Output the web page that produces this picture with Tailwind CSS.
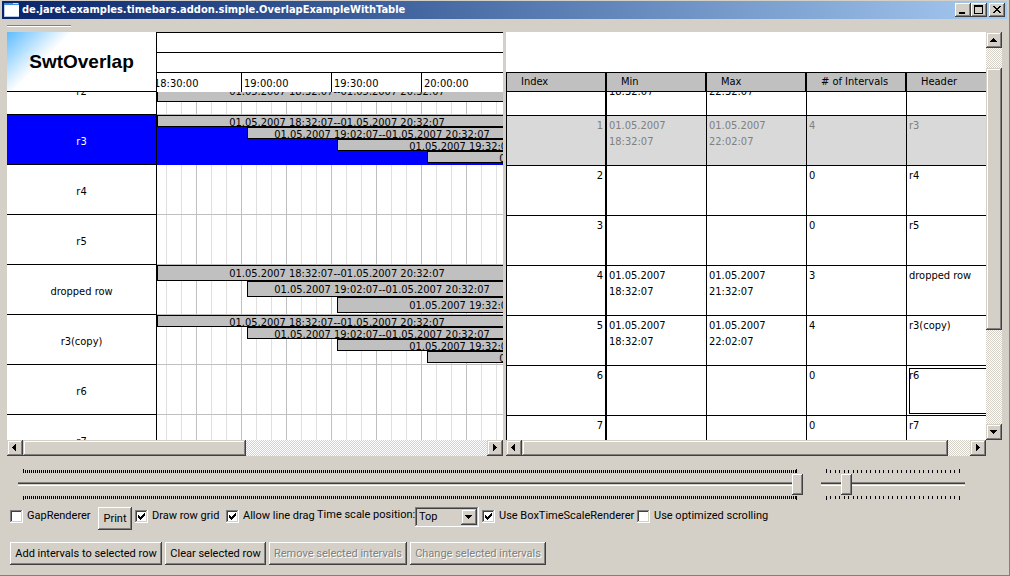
<!DOCTYPE html>
<html lang="en">
<head>
<meta charset="utf-8">
<title>de.jaret.examples.timebars.addon.simple.OverlapExampleWithTable</title>
<script src="https://cdn.jsdelivr.net/npm/@tailwindcss/browser@4"></script>
</head>
<body class="h-screen overflow-hidden bg-[#d4d0c8] font-['DejaVu_Sans_Condensed','Noto_Sans',sans-serif] text-[11px] leading-4 text-black">
<div class="flex h-full flex-col border-r border-b border-[#808080]">

  <!-- Title bar -->
  <header class="mx-0.5 mt-px flex h-[18px] shrink-0 items-center gap-[3px] bg-linear-to-r from-[#0a246a] to-[#a6caf0] pr-0.5 pl-0.5">
    <svg class="h-[14px] w-[15px] shrink-0" viewBox="0 0 15 14" shape-rendering="crispEdges" aria-hidden="true"><rect width="15" height="14" fill="#fff"/><rect width="15" height="2" fill="#3a8ae0"/><rect x="9" y="0" width="5" height="1" fill="#d0e4ff"/><path d="M0 2V13.5H15" fill="none" stroke="#b8cce8"/></svg>
    <h1 class="flex-1 truncate text-[11px] font-bold text-white">de.jaret.examples.timebars.addon.simple.OverlapExampleWithTable</h1>
    <div class="flex">
      <button aria-label="Minimize" class="h-[14px] w-4 bg-[#d4d0c8] shadow-[inset_-1px_-1px_#404040,inset_1px_1px_#fff,inset_-2px_-2px_#808080]"><svg viewBox="0 0 16 14" shape-rendering="crispEdges"><rect x="4" y="9" width="6" height="2"/></svg></button>
      <button aria-label="Maximize" class="h-[14px] w-4 bg-[#d4d0c8] shadow-[inset_-1px_-1px_#404040,inset_1px_1px_#fff,inset_-2px_-2px_#808080]"><svg viewBox="0 0 16 14" shape-rendering="crispEdges"><path d="M3 2h9v9H3zM4 4v6h7V4z" fill-rule="evenodd"/></svg></button>
      <button aria-label="Close" class="ml-0.5 h-[14px] w-4 bg-[#d4d0c8] shadow-[inset_-1px_-1px_#404040,inset_1px_1px_#fff,inset_-2px_-2px_#808080]"><svg viewBox="0 0 16 14" shape-rendering="crispEdges"><path d="M4 3h2v1h1v1h2V4h1V3h2v1h-1v1h-1v1H9v1h1v1h1v1h1v1h-2V9H9V8H7v1H6v1H4V9h1V8h1V7h1V6H6V5H5V4H4z"/></svg></button>
    </div>
  </header>

  <div class="mt-1.5 ml-[7px] h-0.5 w-16 shrink-0 border-t border-b border-t-[#808080] border-b-white"></div>

  <!-- Time bars and table -->
  <main class="mt-[5px] mr-[7px] ml-[7px] grid min-h-0 flex-1 grid-cols-2 grid-rows-[minmax(0,1fr)] gap-[3px]">

    <section class="flex min-h-0 min-w-0 flex-col overflow-hidden" aria-label="Time bars">
      <div class="relative z-10 flex h-[60px] shrink-0 bg-white">
        <div class="flex w-[150px] shrink-0 items-center justify-center border-r border-b border-black bg-[linear-gradient(135deg,#5cbcff,#fff_46px)] font-['Liberation_Sans',sans-serif] text-[19px] font-bold">SwtOverlap</div>
        <div class="flex min-w-0 flex-1 flex-col overflow-hidden">
          <div class="h-5 border-t border-black"></div>
          <div class="h-5 border-t border-black"></div>
          <div class="-ml-1.5 flex h-5 border-t border-black leading-[21px]">
            <span class="w-[90px] shrink-0 border-l border-black pl-0.5">18:30:00</span>
            <span class="w-[90px] shrink-0 border-l border-black pl-0.5">19:00:00</span>
            <span class="w-[90px] shrink-0 border-l border-black pl-0.5">19:30:00</span>
            <span class="w-[90px] shrink-0 border-l border-black pl-0.5">20:00:00</span>
          </div>
        </div>
      </div>
      <div class="flex min-h-0 flex-1 overflow-hidden bg-white">
        <div class="-mt-[27px] flex w-[150px] shrink-0 flex-col border-r border-black text-center leading-[53px]">
          <div class="h-[50px] shrink-0 border-b border-black">r2</div>
          <div class="h-[50px] shrink-0 border-b border-black bg-[#0000ff] text-white">r3</div>
          <div class="h-[50px] shrink-0 border-b border-black">r4</div>
          <div class="h-[50px] shrink-0 border-b border-black">r5</div>
          <div class="h-[50px] shrink-0 border-b border-black">dropped row</div>
          <div class="h-[50px] shrink-0 border-b border-black">r3(copy)</div>
          <div class="h-[50px] shrink-0 border-b border-black">r6</div>
          <div class="h-[50px] shrink-0 border-b border-black">r7</div>
        </div>
        <div class="-mt-[27px] flex min-w-0 flex-1 flex-col overflow-hidden bg-[repeating-linear-gradient(90deg,#c0c0c0_0_1px,transparent_1px_45px),repeating-linear-gradient(90deg,#e0e0e0_0_1px,transparent_1px_15px)] bg-position-[-6px_0] bg-size-[900px_100%] text-center whitespace-nowrap">
          <div class="relative h-[50px] shrink-0 border-b border-[#c0c0c0]">
            <div class="absolute top-4 left-0 h-[21px] w-[360px] border border-black bg-[#c0c0c0] leading-[19px]">01.05.2007 18:32:07--01.05.2007 20:32:07</div>
          </div>
          <div class="relative h-[50px] shrink-0 bg-[#0000ff]">
            <div class="absolute top-0 left-0 h-3 w-[360px] border border-black bg-[#c0c0c0] leading-[14px]">01.05.2007 18:32:07--01.05.2007 20:32:07</div>
            <div class="absolute top-3 left-[90px] h-3 w-[270px] border border-black bg-[#c0c0c0] leading-[14px]">01.05.2007 19:02:07--01.05.2007 20:32:07</div>
            <div class="absolute top-6 left-[180px] h-3 w-[360px] border border-black bg-[#c0c0c0] leading-[14px]">01.05.2007 19:32:07--01.05.2007 21:32:07</div>
            <div class="absolute top-9 left-[270px] h-3 w-[360px] border border-black bg-[#c0c0c0] leading-[14px]">01.05.2007 20:02:07--01.05.2007 22:02:07</div>
          </div>
          <div class="h-[50px] shrink-0 border-b border-[#c0c0c0]"></div>
          <div class="h-[50px] shrink-0 border-b border-[#c0c0c0]"></div>
          <div class="relative h-[50px] shrink-0 border-b border-[#c0c0c0]">
            <div class="absolute top-0 left-0 h-4 w-[360px] border border-black bg-[#c0c0c0] leading-4">01.05.2007 18:32:07--01.05.2007 20:32:07</div>
            <div class="absolute top-4 left-[90px] h-4 w-[270px] border border-black bg-[#c0c0c0] leading-4">01.05.2007 19:02:07--01.05.2007 20:32:07</div>
            <div class="absolute top-8 left-[180px] h-4 w-[360px] border border-black bg-[#c0c0c0] leading-4">01.05.2007 19:32:07--01.05.2007 21:32:07</div>
          </div>
          <div class="relative h-[50px] shrink-0 border-b border-[#c0c0c0]">
            <div class="absolute top-0 left-0 h-3 w-[360px] border border-black bg-[#c0c0c0] leading-[14px]">01.05.2007 18:32:07--01.05.2007 20:32:07</div>
            <div class="absolute top-3 left-[90px] h-3 w-[270px] border border-black bg-[#c0c0c0] leading-[14px]">01.05.2007 19:02:07--01.05.2007 20:32:07</div>
            <div class="absolute top-6 left-[180px] h-3 w-[360px] border border-black bg-[#c0c0c0] leading-[14px]">01.05.2007 19:32:07--01.05.2007 21:32:07</div>
            <div class="absolute top-9 left-[270px] h-3 w-[360px] border border-black bg-[#c0c0c0] leading-[14px]">01.05.2007 20:02:07--01.05.2007 22:02:07</div>
          </div>
          <div class="h-[50px] shrink-0 border-b border-[#c0c0c0]"></div>
          <div class="h-[50px] shrink-0 border-b border-[#c0c0c0]"></div>
        </div>
      </div>
      <div class="flex h-4 shrink-0 bg-[repeating-conic-gradient(#fff_0_25%,#d4d0c8_0_50%)] bg-size-[2px_2px]">
        <button aria-label="Scroll left" class="w-4 bg-[#d4d0c8] shadow-[inset_-1px_-1px_#404040,inset_1px_1px_#d4d0c8,inset_-2px_-2px_#808080,inset_2px_2px_#fff]"><svg viewBox="0 0 16 16" shape-rendering="crispEdges"><path d="M5 7h1V6h1V5h1V4h1v7H8v-1H7V9H6V8H5z"/></svg></button>
        <div class="w-[45%] bg-[#d4d0c8] shadow-[inset_-1px_-1px_#404040,inset_1px_1px_#d4d0c8,inset_-2px_-2px_#808080,inset_2px_2px_#fff]"></div>
        <button aria-label="Scroll right" class="ml-auto w-4 bg-[#d4d0c8] shadow-[inset_-1px_-1px_#404040,inset_1px_1px_#d4d0c8,inset_-2px_-2px_#808080,inset_2px_2px_#fff]"><svg viewBox="0 0 16 16" shape-rendering="crispEdges"><path d="M6 4h1v1h1v1h1v1h1v1H9v1H8v1H7v1H6z"/></svg></button>
      </div>
    </section>

    <section class="flex min-h-0 min-w-0" aria-label="Row table">
      <div class="flex min-w-0 flex-1 flex-col">
        <div class="min-h-0 flex-1 overflow-hidden bg-white pt-10">
          <table class="w-full table-fixed border-separate border-spacing-0 text-left [&_td]:border-l [&_td]:border-black [&_td]:p-0 [&_td]:pl-0.5 [&_td]:align-top [&_td:first-child]:border-r [&_td:first-child]:pr-0.5 [&_td:first-child]:text-right">
            <thead>
              <tr class="h-5 bg-[#c0c0c0] [&_th]:border-y [&_th]:border-l [&_th]:border-black [&_th]:p-0 [&_th]:pl-3.5 [&_th]:leading-[18px] [&_th]:font-normal">
                <th scope="col" class="w-[100px] border-r">Index</th>
                <th scope="col" class="w-[100px] border-r">Min</th>
                <th scope="col" class="w-[100px] border-r">Max</th>
                <th scope="col" class="w-[100px] border-r"># of Intervals</th>
                <th scope="col">Header</th>
              </tr>
            </thead>
            <tbody>
              <tr class="h-[23px]">
                <td></td>
                <td><div class="h-[23px] overflow-hidden"><div class="-mt-6">01.05.2007<br>18:32:07</div></div></td>
                <td><div class="h-[23px] overflow-hidden"><div class="-mt-6">01.05.2007<br>22:32:07</div></div></td>
                <td></td>
                <td></td>
              </tr>
              <tr class="h-[50px] bg-[#d9d9d9] text-[#808080] [&_td]:border-t [&_td]:border-[#777777] [&_td]:pt-0.5">
                <td>1</td><td>01.05.2007<br>18:32:07</td><td>01.05.2007<br>22:02:07</td><td>4</td><td>r3</td>
              </tr>
              <tr class="h-[50px] [&_td]:border-t [&_td]:pt-0.5"><td>2</td><td></td><td></td><td>0</td><td>r4</td></tr>
              <tr class="h-[50px] [&_td]:border-t [&_td]:pt-0.5"><td>3</td><td></td><td></td><td>0</td><td>r5</td></tr>
              <tr class="h-[50px] [&_td]:border-t [&_td]:pt-0.5"><td>4</td><td>01.05.2007<br>18:32:07</td><td>01.05.2007<br>21:32:07</td><td>3</td><td>dropped row</td></tr>
              <tr class="h-[50px] [&_td]:border-t [&_td]:pt-0.5"><td>5</td><td>01.05.2007<br>18:32:07</td><td>01.05.2007<br>22:02:07</td><td>4</td><td>r3(copy)</td></tr>
              <tr class="h-[50px] [&_td]:border-t [&_td]:pt-0.5"><td>6</td><td></td><td></td><td>0</td><td><div class="h-[46px] border-y border-l border-black"><div class="-mt-px -ml-px">r6</div></div></td></tr>
              <tr class="h-[50px] [&_td]:border-t [&_td]:pt-0.5"><td>7</td><td></td><td></td><td>0</td><td>r7</td></tr>
            </tbody>
          </table>
        </div>
        <div class="flex h-4 shrink-0 bg-[repeating-conic-gradient(#fff_0_25%,#d4d0c8_0_50%)] bg-size-[2px_2px]">
          <button aria-label="Scroll left" class="w-4 bg-[#d4d0c8] shadow-[inset_-1px_-1px_#404040,inset_1px_1px_#d4d0c8,inset_-2px_-2px_#808080,inset_2px_2px_#fff]"><svg viewBox="0 0 16 16" shape-rendering="crispEdges"><path d="M5 7h1V6h1V5h1V4h1v7H8v-1H7V9H6V8H5z"/></svg></button>
          <div class="mr-[22px] flex-1 bg-[#d4d0c8] shadow-[inset_-1px_-1px_#404040,inset_1px_1px_#d4d0c8,inset_-2px_-2px_#808080,inset_2px_2px_#fff]"></div>
          <button aria-label="Scroll right" class="w-4 bg-[#d4d0c8] shadow-[inset_-1px_-1px_#404040,inset_1px_1px_#d4d0c8,inset_-2px_-2px_#808080,inset_2px_2px_#fff]"><svg viewBox="0 0 16 16" shape-rendering="crispEdges"><path d="M6 4h1v1h1v1h1v1h1v1H9v1H8v1H7v1H6z"/></svg></button>
        </div>
      </div>
      <div class="mb-4 flex w-4 shrink-0 flex-col bg-[repeating-conic-gradient(#fff_0_25%,#d4d0c8_0_50%)] bg-size-[2px_2px]">
        <button aria-label="Scroll up" class="h-4 bg-[#d4d0c8] shadow-[inset_-1px_-1px_#404040,inset_1px_1px_#d4d0c8,inset_-2px_-2px_#808080,inset_2px_2px_#fff]"><svg viewBox="0 0 16 16" shape-rendering="crispEdges"><path d="M7 6h1v1h1v1h1v1h1v1H4V9h1V8h1V7h1z"/></svg></button>
        <div class="mt-5 mb-[94px] flex-1 bg-[#d4d0c8] shadow-[inset_-1px_-1px_#404040,inset_1px_1px_#d4d0c8,inset_-2px_-2px_#808080,inset_2px_2px_#fff]"></div>
        <button aria-label="Scroll down" class="h-4 bg-[#d4d0c8] shadow-[inset_-1px_-1px_#404040,inset_1px_1px_#d4d0c8,inset_-2px_-2px_#808080,inset_2px_2px_#fff]"><svg viewBox="0 0 16 16" shape-rendering="crispEdges"><path d="M4 6h7v1h-1v1H9v1H8v1H7V9H6V8H5V7H4z"/></svg></button>
      </div>
    </section>
  </main>

  <!-- Scales -->
  <div class="mt-[13px] flex shrink-0 gap-[18px] pr-[44px] pl-[18px]">
    <div class="flex flex-1 flex-col">
      <div class="mr-[6px] ml-[5px] h-1 border-x border-black bg-[repeating-linear-gradient(90deg,transparent_0_1px,#000_1px_2px)] bg-size-[100%_3px] bg-bottom bg-no-repeat"></div>
      <input type="range" min="0" max="387" value="387" aria-label="Time scale zoom" class="my-px h-[21px] w-full appearance-none bg-[linear-gradient(#808080_1px,#404040_1px_2px,#d4d0c8_2px_3px,#fff_3px)] bg-size-[100%_4px] bg-position-[0_8px] bg-no-repeat [&::-webkit-slider-thumb]:h-[21px] [&::-webkit-slider-thumb]:w-[11px] [&::-webkit-slider-thumb]:appearance-none [&::-webkit-slider-thumb]:bg-[#d4d0c8] [&::-webkit-slider-thumb]:shadow-[inset_-1px_-1px_#404040,inset_1px_1px_#fff,inset_-2px_-2px_#808080]">
      <div class="mr-[6px] ml-[5px] h-1 border-x border-black bg-[repeating-linear-gradient(90deg,transparent_0_1px,#000_1px_2px)] bg-size-[100%_3px] bg-top bg-no-repeat"></div>
    </div>
    <div class="flex w-[144px] flex-col">
      <div data-ticks="30" class="mr-[5px] ml-[5px] flex h-1 items-end justify-between"></div>
      <input type="range" min="0" max="400" value="60" aria-label="Row height" class="my-px h-[21px] w-full appearance-none bg-[linear-gradient(#808080_1px,#404040_1px_2px,#d4d0c8_2px_3px,#fff_3px)] bg-size-[100%_4px] bg-position-[0_8px] bg-no-repeat [&::-webkit-slider-thumb]:h-[21px] [&::-webkit-slider-thumb]:w-[11px] [&::-webkit-slider-thumb]:appearance-none [&::-webkit-slider-thumb]:bg-[#d4d0c8] [&::-webkit-slider-thumb]:shadow-[inset_-1px_-1px_#404040,inset_1px_1px_#fff,inset_-2px_-2px_#808080]">
      <div data-ticks="30" class="mr-[5px] ml-[5px] flex h-1 items-start justify-between"></div>
    </div>
  </div>

  <!-- Options -->
  <div class="mt-[7px] flex shrink-0 items-start gap-[3px] pl-2.5 font-[Roboto,sans-serif] whitespace-nowrap">
    <label class="mt-px flex w-[85px] items-center gap-1"><span class="relative size-[13px] shrink-0"><input type="checkbox" class="peer block size-[13px] appearance-none bg-white shadow-[inset_-1px_-1px_#fff,inset_1px_1px_#808080,inset_-2px_-2px_#d4d0c8,inset_2px_2px_#404040]"><svg class="pointer-events-none absolute inset-0 hidden peer-checked:block" viewBox="0 0 13 13" shape-rendering="crispEdges"><path d="M3 5h1v1h1v1h1V6h1V5h1V4h1V3h1v3H9v1H8v1H7v1H6v1H5V9H4V8H3z"/></svg></span>GapRenderer</label>
    <button class="h-[23px] w-[34px] shadow-[inset_-1px_-1px_#404040,inset_1px_1px_#fff,inset_-2px_-2px_#808080]">Print</button>
    <label class="mt-px flex w-[88px] items-center gap-1"><span class="relative size-[13px] shrink-0"><input type="checkbox" checked class="peer block size-[13px] appearance-none bg-white shadow-[inset_-1px_-1px_#fff,inset_1px_1px_#808080,inset_-2px_-2px_#d4d0c8,inset_2px_2px_#404040]"><svg class="pointer-events-none absolute inset-0 hidden peer-checked:block" viewBox="0 0 13 13" shape-rendering="crispEdges"><path d="M3 5h1v1h1v1h1V6h1V5h1V4h1V3h1v3H9v1H8v1H7v1H6v1H5V9H4V8H3z"/></svg></span>Draw row grid</label>
    <label class="mt-px flex w-[88px] items-center gap-1"><span class="relative size-[13px] shrink-0"><input type="checkbox" checked class="peer block size-[13px] appearance-none bg-white shadow-[inset_-1px_-1px_#fff,inset_1px_1px_#808080,inset_-2px_-2px_#d4d0c8,inset_2px_2px_#404040]"><svg class="pointer-events-none absolute inset-0 hidden peer-checked:block" viewBox="0 0 13 13" shape-rendering="crispEdges"><path d="M3 5h1v1h1v1h1V6h1V5h1V4h1V3h1v3H9v1H8v1H7v1H6v1H5V9H4V8H3z"/></svg></span>Allow line drag</label>
    <label for="scalepos" class="w-[95px]">Time scale position:</label>
    <div class="relative h-5 w-16">
      <select id="scalepos" class="h-5 w-16 appearance-none pl-1 shadow-[inset_-1px_-1px_#fff,inset_1px_1px_#808080,inset_-2px_-2px_#d4d0c8,inset_2px_2px_#404040]"><option>Top</option><option>Bottom</option></select>
      <svg class="pointer-events-none absolute top-0.5 right-0.5 size-4 bg-[#d4d0c8] shadow-[inset_-1px_-1px_#404040,inset_1px_1px_#d4d0c8,inset_-2px_-2px_#808080,inset_2px_2px_#fff]" viewBox="0 0 16 16" shape-rendering="crispEdges"><path d="M4 6h7v1h-1v1H9v1H8v1H7V9H6V8H5V7H4z"/></svg>
    </div>
    <label class="mt-px flex w-[152px] items-center gap-1"><span class="relative size-[13px] shrink-0"><input type="checkbox" checked class="peer block size-[13px] appearance-none bg-white shadow-[inset_-1px_-1px_#fff,inset_1px_1px_#808080,inset_-2px_-2px_#d4d0c8,inset_2px_2px_#404040]"><svg class="pointer-events-none absolute inset-0 hidden peer-checked:block" viewBox="0 0 13 13" shape-rendering="crispEdges"><path d="M3 5h1v1h1v1h1V6h1V5h1V4h1V3h1v3H9v1H8v1H7v1H6v1H5V9H4V8H3z"/></svg></span>Use BoxTimeScaleRenderer</label>
    <label class="mt-px flex items-center gap-1"><span class="relative size-[13px] shrink-0"><input type="checkbox" class="peer block size-[13px] appearance-none bg-white shadow-[inset_-1px_-1px_#fff,inset_1px_1px_#808080,inset_-2px_-2px_#d4d0c8,inset_2px_2px_#404040]"><svg class="pointer-events-none absolute inset-0 hidden peer-checked:block" viewBox="0 0 13 13" shape-rendering="crispEdges"><path d="M3 5h1v1h1v1h1V6h1V5h1V4h1V3h1v3H9v1H8v1H7v1H6v1H5V9H4V8H3z"/></svg></span>Use optimized scrolling</label>
  </div>

  <!-- Actions -->
  <div class="mt-3 mb-2.5 flex shrink-0 gap-[3px] pl-2.5 font-[Roboto,sans-serif] whitespace-nowrap">
    <button class="h-[23px] w-[152px] shadow-[inset_-1px_-1px_#404040,inset_1px_1px_#fff,inset_-2px_-2px_#808080]">Add intervals to selected row</button>
    <button class="h-[23px] w-[101px] shadow-[inset_-1px_-1px_#404040,inset_1px_1px_#fff,inset_-2px_-2px_#808080]">Clear selected row</button>
    <button disabled class="h-[23px] w-[138px] text-[#808080] shadow-[inset_-1px_-1px_#404040,inset_1px_1px_#fff,inset_-2px_-2px_#808080] text-shadow-[1px_1px_#fff]">Remove selected intervals</button>
    <button disabled class="h-[23px] w-[136px] text-[#808080] shadow-[inset_-1px_-1px_#404040,inset_1px_1px_#fff,inset_-2px_-2px_#808080] text-shadow-[1px_1px_#fff]">Change selected intervals</button>
  </div>
</div>
<script>
  // Tick marks of the row height scale; the two end ticks are one pixel longer.
  document.querySelectorAll('[data-ticks]').forEach(function (el) {
    var n = Number(el.dataset.ticks);
    for (var i = 0; i <= n; i++) {
      var t = document.createElement('span');
      t.className = i === 0 || i === n ? 'h-1 w-px bg-black' : 'h-[3px] w-px bg-black';
      el.appendChild(t);
    }
  });
</script>
</body>
</html>
